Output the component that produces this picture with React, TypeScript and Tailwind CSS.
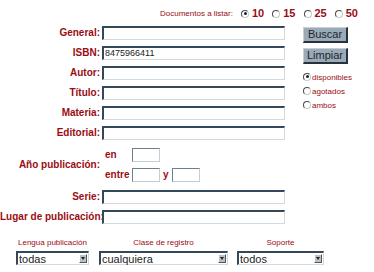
import type { ReactNode } from "react";

const FIELDS_TOP = ["General:", "ISBN:", "Autor:", "Título:", "Materia:", "Editorial:"];

function Radio({ checked = false }: { checked?: boolean }) {
  return (
    <span className="relative inline-block h-[8px] w-[8px] shrink-0 rounded-full border border-t-[#4a4a4a] border-l-[#4a4a4a] border-b-[#c8c8c8] border-r-[#c8c8c8] bg-white">
      {checked ? (
        <span className="absolute left-[1.5px] top-[1.5px] h-[3px] w-[3px] rounded-full bg-[#222]" />
      ) : null}
    </span>
  );
}

function TextBox({ value = "", className = "" }: { value?: string; className?: string }) {
  return (
    <div
      className={`flex h-[14px] items-center border-t-2 border-l-2 border-b border-r border-t-[#33485a] border-l-[#33485a] border-b-[#d3d8dc] border-r-[#d3d8dc] bg-white pl-[1px] text-[9px] leading-none text-[#222] ${className}`}
    >
      {value}
    </div>
  );
}

function SmallBox() {
  return (
    <div className="h-[14px] w-[28px] border border-t-[#6b7f8e] border-l-[#6b7f8e] border-b-[#c6ced4] border-r-[#c6ced4] bg-white" />
  );
}

function Row({ label, children }: { label: string; children: ReactNode }) {
  return (
    <div className="flex h-[14px] items-center">
      <span className="w-[100px] whitespace-nowrap text-right text-[10px] font-bold leading-none text-[#9a0c14]">
        {label}
      </span>
      <div className="ml-[2px]">{children}</div>
    </div>
  );
}

function FakeSelect({ label, value, width }: { label: string; value: string; width: string }) {
  return (
    <div className={`flex flex-col items-center ${width}`}>
      <span className="h-[10px] whitespace-nowrap text-[8px] leading-[10px] text-[#9a0c14]">{label}</span>
      <div className="mt-[3px] flex h-[14px] w-full items-stretch border-t-2 border-l-2 border-b border-r border-t-[#33485a] border-l-[#33485a] border-b-[#d3d8dc] border-r-[#d3d8dc] bg-white">
        <span className="flex-1 pl-[1px] text-[11px] leading-[12px] text-[#222]">{value}</span>
        <span className="m-[1px] flex w-[8px] items-center justify-center border border-t-white border-l-white border-b-[#555] border-r-[#555] bg-[#b9c0c6]">
          <span className="h-0 w-0 border-x-[2px] border-t-[3px] border-x-transparent border-t-[#222]" />
        </span>
      </div>
    </div>
  );
}

export default function App() {
  return (
    <div className="h-[272px] w-[374px] overflow-hidden bg-white font-['Liberation_Sans',Arial,sans-serif]">
      <div className="ml-[160px] mt-[8px] flex h-[11px] items-center">
        <span className="w-[81px] whitespace-nowrap text-[8px] leading-none text-[#9a0c14]">Documentos a listar:</span>
        {["10", "15", "25", "50"].map((n, i) => (
          <span key={n} className="flex items-center">
            <Radio checked={i === 0} />
            <span className="ml-[3px] mr-[8px] text-[11px] font-bold leading-none text-[#9a0c14]">{n}</span>
          </span>
        ))}
      </div>

      <div className="mt-[7px] flex">
        <div className="flex flex-col">
          <div className="flex flex-col gap-[6px]">
            {FIELDS_TOP.map((label) => (
              <Row key={label} label={label}>
                <TextBox className="w-[183px]" value={label === "ISBN:" ? "8475966411" : ""} />
              </Row>
            ))}
          </div>

          <div className="mt-[8px] flex items-center">
            <span className="w-[100px] whitespace-nowrap text-right text-[10px] font-bold leading-none text-[#9a0c14]">
              Año publicación:
            </span>
            <div className="ml-[5px] flex flex-col gap-[6px]">
              <div className="flex h-[14px] items-center">
                <span className="w-[27px] text-[10px] font-bold leading-none text-[#9a0c14]">en</span>
                <SmallBox />
              </div>
              <div className="flex h-[14px] items-center">
                <span className="w-[27px] text-[10px] font-bold leading-none text-[#9a0c14]">entre</span>
                <SmallBox />
                <span className="mx-[3px] text-[10px] font-bold leading-none text-[#9a0c14]">y</span>
                <SmallBox />
              </div>
            </div>
          </div>

          <div className="mt-[8px] flex flex-col gap-[6px]">
            <Row label="Serie:">
              <TextBox className="w-[183px]" />
            </Row>
            <Row label="Lugar de publicación:">
              <TextBox className="w-[183px]" />
            </Row>
          </div>
        </div>

        <div className="ml-[18px] flex flex-col">
          {["Buscar", "Limpiar"].map((b, i) => (
            <button
              key={b}
              type="button"
              className={`${i === 0 ? "mt-[1px]" : "mt-[5px]"} flex h-[16px] w-[45px] items-center justify-center border border-t-[#c7d0d8] border-l-[#c7d0d8] border-b-2 border-r-2 border-b-[#27323c] border-r-[#27323c] bg-[#9baab7] text-[11px] leading-none text-[#1c2630]`}
            >
              {b}
            </button>
          ))}
          <div className="mt-[7px] flex flex-col">
            {["disponibles", "agotados", "ambos"].map((t, i) => (
              <div key={t} className="flex h-[14px] items-center">
                <span className="-mt-[3px] flex">
                  <Radio checked={i === 0} />
                </span>
                <span className="ml-[1px] text-[8px] leading-none text-[#9a0c14]">{t}</span>
              </div>
            ))}
          </div>
        </div>
      </div>

      <div className="ml-[16px] mt-[14px] flex">
        <FakeSelect label="Lengua publicación" value="todas" width="w-[73px]" />
        <div className="ml-[10px]">
          <FakeSelect label="Clase de registro" value="cualquiera" width="w-[129px]" />
        </div>
        <div className="ml-[9px]">
          <FakeSelect label="Soporte" value="todos" width="w-[87px]" />
        </div>
      </div>
    </div>
  );
}
